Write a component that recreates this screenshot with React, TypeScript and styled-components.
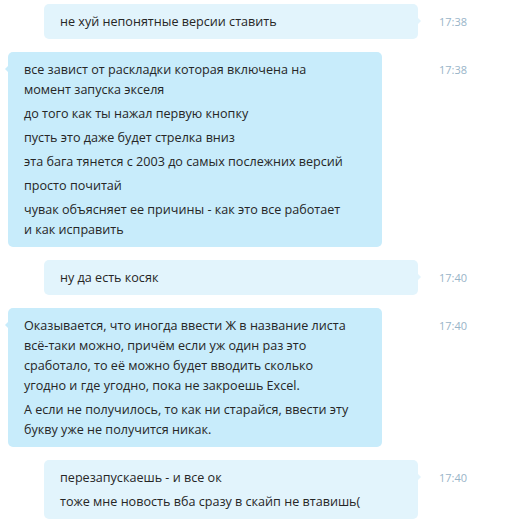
import styled, { createGlobalStyle } from 'styled-components'

const GlobalStyle = createGlobalStyle`
    body {
        margin: 0;
        background: #ffffff;
        font-family: "Open Sans", "Noto Sans", sans-serif;
    }
`

const Chat = styled.div`
    display: flex;
    flex-direction: column;
    gap: 13px;
    padding-top: 4px;
    width: 510px;
`

const Row = styled.div`
    display: grid;
    grid-template-columns: 418px 1fr;
    align-items: start;
`

const Bubble = styled.div<{ $out?: boolean }>`
    position: relative;
    width: 374px;
    box-sizing: border-box;
    margin-left: ${props => (props.$out ? '44px' : '8px')};
    padding: 8px 33px 7px 16px;
    border-radius: 5px;
    background: ${props => (props.$out ? '#e2f4fc' : '#c8ecfb')};
    color: #262626;
    font-size: 12.6px;
    line-height: 20px;

    &::after {
        content: '';
        position: absolute;
        top: 14px;
        ${props => (props.$out ? 'right: -3px;' : 'left: -3px;')}
        border-top: 3px solid transparent;
        border-bottom: 3px solid transparent;
        ${props =>
            props.$out
                ? 'border-left: 3px solid #e2f4fc;'
                : 'border-right: 3px solid #c8ecfb;'}
    }
`

const Para = styled.p`
    margin: 0;
    & + & {
        margin-top: 4px;
    }
`

const Time = styled.span`
    padding: 8px 0 0 21px;
    font-size: 11px;
    line-height: 20px;
    color: #98b4c8;
`

type Message = {
    out: boolean
    time: string
    lines: string[]
}

const messages: Message[] = [
    { out: true, time: '17:38', lines: ['не хуй непонятные версии ставить'] },
    {
        out: false,
        time: '17:38',
        lines: [
            'все завист от раскладки которая включена на момент запуска экселя',
            'до того как ты нажал первую кнопку',
            'пусть это даже будет стрелка вниз',
            'эта бага тянется с 2003 до самых послежних версий',
            'просто почитай',
            'чувак объясняет ее причины - как это все работает и как исправить',
        ],
    },
    { out: true, time: '17:40', lines: ['ну да есть косяк'] },
    {
        out: false,
        time: '17:40',
        lines: [
            'Оказывается, что иногда ввести Ж в название листа всё\u2011таки можно, причём если уж один раз это сработало, то её можно будет вводить сколько угодно и где угодно, пока не закроешь Excel.',
            'А если не получилось, то как ни старайся, ввести эту букву уже не получится никак.',
        ],
    },
    {
        out: true,
        time: '17:40',
        lines: ['перезапускаешь - и все ок', 'тоже мне новость вба сразу в скайп не втавишь('],
    },
]

const App = () => {
    return (
        <>
            <GlobalStyle />
            <Chat>
                {messages.map((m, i) => (
                    <Row key={i}>
                        <Bubble $out={m.out}>
                            {m.lines.map((line, j) => (
                                <Para key={j}>{line}</Para>
                            ))}
                        </Bubble>
                        <Time>{m.time}</Time>
                    </Row>
                ))}
            </Chat>
        </>
    )
}

export default App
